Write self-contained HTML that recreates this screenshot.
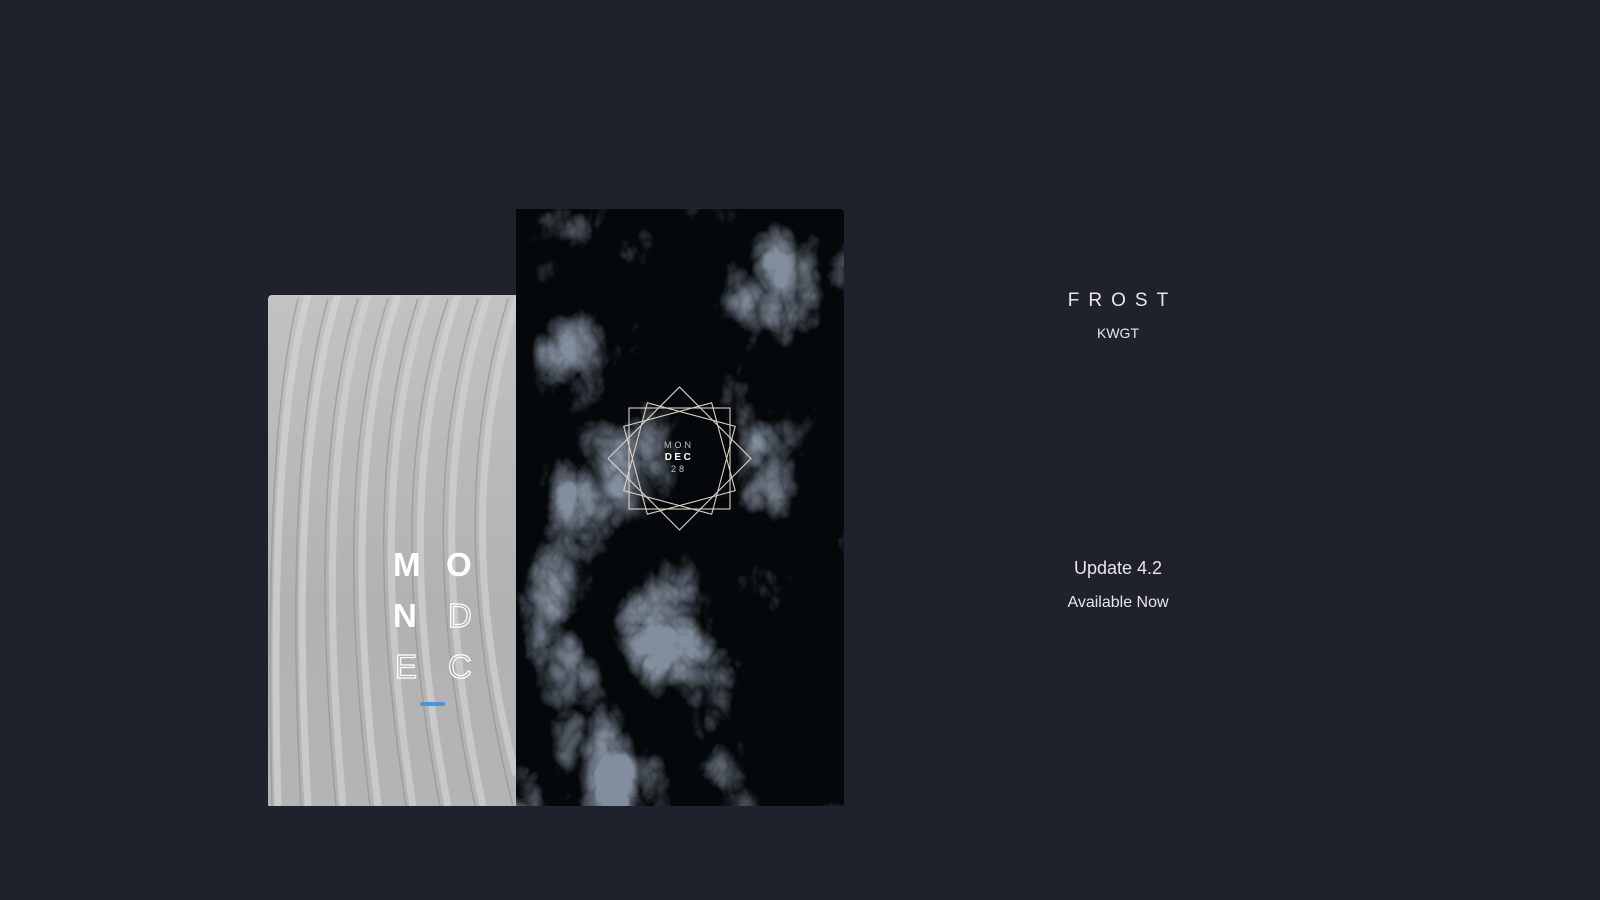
<!DOCTYPE html>
<html><head><meta charset="utf-8"><style>
html,body{margin:0;padding:0;width:1600px;height:900px;background:#1f222c;overflow:hidden;font-family:"Liberation Sans",sans-serif}
.abs{position:absolute}
.t{position:absolute;width:300px;left:968px;text-align:center;color:#e6e7ea}
</style></head><body>
<div class="abs" style="left:268px;top:295px;width:248px;height:511px;overflow:hidden;border-radius:4px 0 0 0;background:linear-gradient(180deg,#c2c2c2,#b2b2b2 60%,#b4b4b4)">
<svg width="248" height="511" viewBox="0 0 248 511">
<g fill="none" stroke-width="7" opacity="0.7">
<path d="M40 0 Q0 140 10 511" stroke="#d4d4d4"/>
<path d="M70 0 Q20 160 40 511" stroke="#d4d4d4"/>
<path d="M100 0 Q45 170 75 511" stroke="#d2d2d2"/>
<path d="M130 0 Q70 180 110 511" stroke="#d4d4d4"/>
<path d="M160 0 Q95 190 145 511" stroke="#d2d2d2"/>
<path d="M190 0 Q120 200 180 511" stroke="#d3d3d3"/>
<path d="M220 0 Q150 210 215 511" stroke="#d2d2d2"/>
<path d="M250 0 Q180 220 248 480" stroke="#d2d2d2"/>
</g>
<g fill="none" stroke="#959595" stroke-width="1.5" opacity="0.7">
<path d="M30 4 Q-5 140 4 511"/><path d="M60 4 Q15 160 33 511"/><path d="M90 4 Q38 170 68 511"/><path d="M120 4 Q62 180 102 511"/><path d="M150 4 Q88 190 138 511"/><path d="M180 4 Q112 200 172 511"/><path d="M210 4 Q142 210 207 511"/><path d="M240 4 Q172 220 245 511"/>
</g>
<text x="125" y="281" font-family="Liberation Sans" font-weight="bold" font-size="33" fill="#fff">M</text>
<text x="178" y="281" font-family="Liberation Sans" font-weight="bold" font-size="33" fill="#fff">O</text>
<text x="125" y="332" font-family="Liberation Sans" font-weight="bold" font-size="33" fill="#fff">N</text>
<text x="180" y="332" font-family="Liberation Sans" font-size="33" fill="none" stroke="#fff" stroke-width="1.2">D</text>
<text x="127" y="383" font-family="Liberation Sans" font-size="33" fill="none" stroke="#fff" stroke-width="1.2">E</text>
<text x="180" y="383" font-family="Liberation Sans" font-size="33" fill="none" stroke="#fff" stroke-width="1.2">C</text>
<rect x="152" y="407" width="25" height="4" rx="2" fill="#4d94e0"/>
</svg></div>
<div class="abs" style="left:516px;top:209px;width:328px;height:597px;overflow:hidden;border-radius:0 4px 0 0;background:#06080b">
<svg width="328" height="597" viewBox="0 0 328 597">
<defs>
<filter id="f" x="0" y="0" width="100%" height="100%">
<feTurbulence type="turbulence" baseFrequency="0.008 0.006" numOctaves="5" seed="7"/>
<feColorMatrix type="matrix" values="0 0 0 0 0.36  0 0 0 0 0.43  0 0 0 0 0.54  4 0 0 0 -1.3"/>
</filter>
</defs>
<rect width="328" height="597" filter="url(#f)"/>
<rect width="328" height="597" fill="#06080b" opacity="0.2"/>
<g fill="none" stroke="#d9d2c6" stroke-width="1.1">
<rect x="113" y="199" width="101" height="101"/>
<rect x="113" y="199" width="101" height="101" transform="rotate(45 163.5 249.5)"/>
<rect x="118" y="204" width="91" height="91" transform="rotate(15 163.5 249.5)"/>
<rect x="118" y="204" width="91" height="91" transform="rotate(-15 163.5 249.5)"/>
</g>
<text x="163" y="239" text-anchor="middle" font-size="9" letter-spacing="3" fill="#c9c4bb">MON</text>
<text x="163" y="251" text-anchor="middle" font-size="10" font-weight="bold" letter-spacing="2.5" fill="#fff">DEC</text>
<text x="163" y="263" text-anchor="middle" font-size="9" letter-spacing="3" fill="#c9c4bb">28</text>
</svg></div>
<div class="t" style="top:290px;font-size:19px;letter-spacing:9px;text-indent:9px">FROST</div>
<div class="t" style="top:325px;font-size:14px">KWGT</div>
<div class="t" style="top:558px;font-size:18px">Update 4.2</div>
<div class="t" style="top:594px;font-size:16px">Available Now</div>
</body></html>
